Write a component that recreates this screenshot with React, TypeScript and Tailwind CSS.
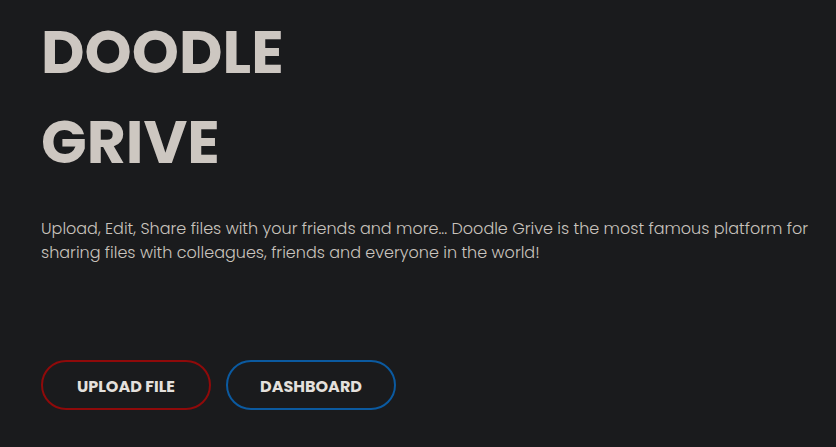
import React from 'react';

const App: React.FC = () => {
  return (
    <div className="min-h-[447px] w-full bg-[#1a1b1d] font-['Poppins','Open_Sans','Liberation_Sans',sans-serif]">
      <section className="pl-[41px] pr-5 pt-[7px]">
        <h1 className="text-[60px] font-bold leading-[90px] text-[#cdc7c1]">
          DOODLE
          <br />
          GRIVE
        </h1>
        <p className="mt-[30px] text-[16px] font-light leading-[24px] text-[#c9c3bd]">
          Upload, Edit, Share files with your friends and more... Doodle Grive is the most famous platform for
          sharing files with colleagues, friends and everyone in the world!
        </p>
        <div className="mt-[95px] flex gap-[15px]">
          <button className="h-[50px] w-[170px] rounded-full border-2 border-[#8f0a0a] pt-[4px] text-[16px] font-bold text-[#e4e0dc]">
            UPLOAD FILE
          </button>
          <button className="h-[50px] w-[170px] rounded-full border-2 border-[#0b5aa0] pt-[4px] text-[16px] font-bold text-[#e4e0dc]">
            DASHBOARD
          </button>
        </div>
      </section>
    </div>
  );
};

export default App;
